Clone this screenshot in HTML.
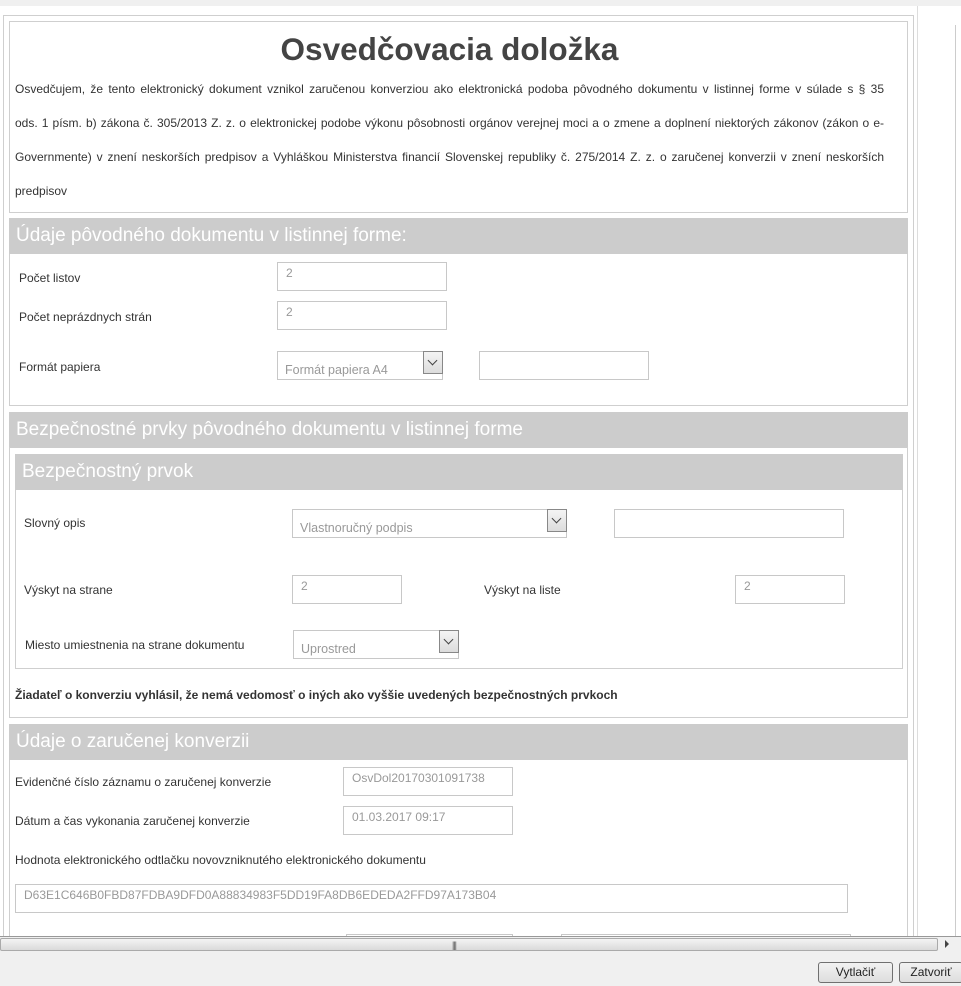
<!DOCTYPE html>
<html><head><meta charset="utf-8"><style>
*{margin:0;padding:0;box-sizing:border-box}
body{width:961px;height:986px;overflow:hidden;background:#fff;font-family:"Liberation Sans",Arial,sans-serif;color:#333;position:relative;font-size:12px}
.a{position:absolute}
.b{position:absolute;border:1px solid #cfcfcf}
.h{position:absolute;background:#cccccc;color:#fff;font-size:19px;line-height:36px;padding-left:7px;white-space:nowrap;overflow:hidden}
.l{position:absolute;font-size:12px;color:#333;white-space:nowrap;line-height:14px}
.i{position:absolute;border:1px solid #c8c8c8;color:#999;font-size:12px;padding:3px 0 0 8px;background:#fff}
.s{position:absolute;border:1px solid #c8c8c8;color:#999;font-size:12.5px;padding:11px 0 0 7px;background:#fff}
.s .ar{position:absolute;right:-1px;top:-1px;width:20px;height:23px;border:1px solid #888;background:linear-gradient(#f4f4f4,#dcdcdc)}
.s .ar:after{content:"";position:absolute;left:5px;top:5px;width:6px;height:6px;border-right:1.5px solid #444;border-bottom:1.5px solid #444;transform:rotate(45deg)}
.pl{position:absolute;left:15px;width:869px;font-size:12px;line-height:14px;text-align:justify;text-align-last:justify;color:#333;white-space:nowrap}
</style></head><body>
<div class="a" style="left:0;top:0;width:961px;height:6px;background:#f0f0f0"></div>
<div class="b" style="left:3px;top:15px;width:911px;height:930px"></div>
<div class="a" style="left:917px;top:6px;width:1px;height:930px;background:#ddd"></div>
<div class="a" style="left:955px;top:25px;width:1px;height:911px;background:#ccc"></div>

<div class="b" style="left:9px;top:21px;width:899px;height:192px"></div>
<div class="a" style="left:0;top:29px;width:899px;text-align:center;font-size:31.5px;font-weight:bold;color:#444;line-height:40px">Osvedčovacia doložka</div>
<div class="pl" style="top:82px">Osvedčujem, že tento elektronický dokument vznikol zaručenou konverziou ako elektronická podoba pôvodného dokumentu v listinnej forme v súlade s § 35</div>
<div class="pl" style="top:116px">ods. 1 písm. b) zákona č. 305/2013 Z. z. o elektronickej podobe výkonu pôsobnosti orgánov verejnej moci a o zmene a doplnení niektorých zákonov (zákon o e-</div>
<div class="pl" style="top:150px">Governmente) v znení neskorších predpisov a Vyhláškou Ministerstva financií Slovenskej republiky č. 275/2014 Z. z. o zaručenej konverzii v znení neskorších</div>
<div class="l" style="left:15px;top:184px">predpisov</div>

<div class="h" style="left:9px;top:218px;width:899px">Údaje pôvodného dokumentu v listinnej forme:</div>
<div class="b" style="left:9px;top:254px;width:899px;height:152px;border-top:0"></div>
<div class="l" style="left:19px;top:271px">Počet listov</div>
<div class="i" style="left:277px;top:262px;width:170px;height:29px">2</div>
<div class="l" style="left:19px;top:310px">Počet neprázdnych strán</div>
<div class="i" style="left:277px;top:301px;width:170px;height:29px">2</div>
<div class="l" style="left:19px;top:360px">Formát papiera</div>
<div class="s" style="left:277px;top:351px;width:166px;height:29px">Formát papiera A4<div class="ar"></div></div>
<div class="i" style="left:479px;top:351px;width:170px;height:29px"></div>

<div class="h" style="left:9px;top:412px;width:899px">Bezpečnostné prvky pôvodného dokumentu v listinnej forme</div>
<div class="b" style="left:9px;top:447px;width:899px;height:271px;border-top:0"></div>
<div class="h" style="left:15px;top:454px;width:888px">Bezpečnostný prvok</div>
<div class="b" style="left:15px;top:490px;width:888px;height:179px;border-top:0"></div>
<div class="l" style="left:24px;top:516px">Slovný opis</div>
<div class="s" style="left:292px;top:509px;width:275px;height:29px">Vlastnoručný podpis<div class="ar"></div></div>
<div class="i" style="left:614px;top:509px;width:230px;height:29px"></div>
<div class="l" style="left:24px;top:583px">Výskyt na strane</div>
<div class="i" style="left:292px;top:575px;width:110px;height:29px">2</div>
<div class="l" style="left:484px;top:583px">Výskyt na liste</div>
<div class="i" style="left:735px;top:575px;width:110px;height:29px">2</div>
<div class="l" style="left:25px;top:638px">Miesto umiestnenia na strane dokumentu</div>
<div class="s" style="left:293px;top:630px;width:166px;height:29px">Uprostred<div class="ar"></div></div>
<div class="l" style="left:15px;top:688px;font-weight:bold">Žiadateľ o konverziu vyhlásil, že nemá vedomosť o iných ako vyššie uvedených bezpečnostných prvkoch</div>

<div class="h" style="left:9px;top:724px;width:899px">Údaje o zaručenej konverzii</div>
<div class="b" style="left:9px;top:760px;width:899px;height:190px;border-top:0"></div>
<div class="l" style="left:15px;top:775px">Evidenčné číslo záznamu o zaručenej konverzie</div>
<div class="i" style="left:343px;top:767px;width:170px;height:29px">OsvDol20170301091738</div>
<div class="l" style="left:15px;top:814px">Dátum a čas vykonania zaručenej konverzie</div>
<div class="i" style="left:343px;top:806px;width:170px;height:29px">01.03.2017 09:17</div>
<div class="l" style="left:15px;top:853px">Hodnota elektronického odtlačku novovzniknutého elektronického dokumentu</div>
<div class="i" style="left:15px;top:884px;width:833px;height:29px">D63E1C646B0FBD87FDBA9DFD0A88834983F5DD19FA8DB6EDEDA2FFD97A173B04</div>
<div class="i" style="left:346px;top:934px;width:167px;height:10px"></div>
<div class="i" style="left:561px;top:934px;width:290px;height:10px"></div>

<div class="a" style="left:0;top:936px;width:961px;height:16px;background:#f0f0f0;border-top:1px solid #999"></div>
<div class="a" style="left:0;top:938px;width:938px;height:13px;background:linear-gradient(#f4f4f4,#dadada);border:1px solid #aaa;border-radius:2px"></div>
<div class="a" style="left:452px;top:940px;font-size:9px;color:#555;letter-spacing:-1px">|||</div>
<div class="a" style="left:945px;top:940px;width:0;height:0;border-left:4px solid #444;border-top:4px solid transparent;border-bottom:4px solid transparent"></div>
<div class="a" style="left:0;top:952px;width:961px;height:34px;background:#f0f0f0"></div>
<div class="a" style="left:818px;top:962px;width:75px;height:21px;border:1px solid #707070;border-radius:3px;background:linear-gradient(#f2f2f2,#dddddd);text-align:center;line-height:19px;font-size:12px;color:#222">Vytlačiť</div>
<div class="a" style="left:899px;top:962px;width:64px;height:21px;border:1px solid #707070;border-radius:3px;background:linear-gradient(#f2f2f2,#dddddd);text-align:center;line-height:19px;font-size:12px;color:#222">Zatvoriť</div>
</body></html>
